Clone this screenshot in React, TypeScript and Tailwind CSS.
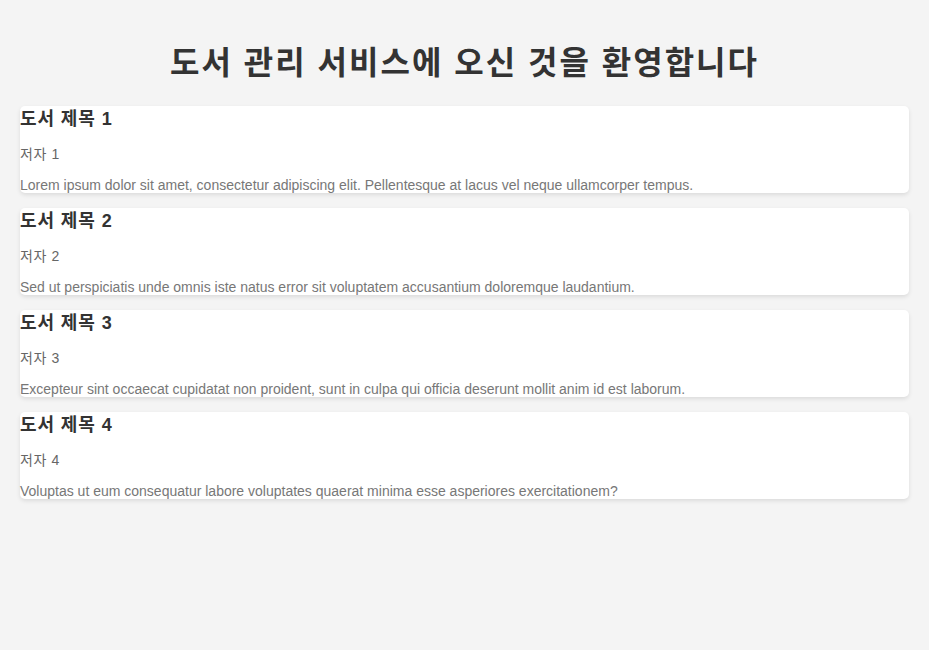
const books = [
  {
    title: '도서 제목 1',
    author: '저자 1',
    description: 'Lorem ipsum dolor sit amet, consectetur adipiscing elit. Pellentesque at lacus vel neque ullamcorper tempus.',
  },
  {
    title: '도서 제목 2',
    author: '저자 2',
    description: 'Sed ut perspiciatis unde omnis iste natus error sit voluptatem accusantium doloremque laudantium.',
  },
  {
    title: '도서 제목 3',
    author: '저자 3',
    description: 'Excepteur sint occaecat cupidatat non proident, sunt in culpa qui officia deserunt mollit anim id est laborum.',
  },
  {
    title: '도서 제목 4',
    author: '저자 4',
    description: 'Voluptas ut eum consequatur labore voluptates quaerat minima esse asperiores exercitationem?',
  },
];

type Book = (typeof books)[number];

const BookCard = ({ book }: { book: Book }) => (
  <div className="flex flex-col bg-white rounded-[5px] shadow-[0_2px_4px_rgba(0,0,0,0.1)]">
    <h3 className="text-[18px] leading-[26px] font-bold tracking-[0.9px] text-[#333]">{book.title}</h3>
    <p className="mt-[14px] text-[14px] leading-[16px] tracking-[0.6px] text-[#666]">{book.author}</p>
    <p className="mt-[15px] text-[14px] leading-[16px] text-[#777]">{book.description}</p>
  </div>
);

export default function App() {
  return (
    <div
      className="min-h-[650px] bg-[#f4f4f4] px-[20px] pt-[20px]"
      style={{ fontFamily: '"Liberation Sans", Arial, "Noto Sans CJK KR", sans-serif' }}
    >
      <h1 className="mt-[21px] text-center text-[32px] leading-[44px] font-bold tracking-[2px] text-[#333]">
        도서 관리 서비스에 오신 것을 환영합니다
      </h1>
      <div className="mt-[21px] flex flex-col gap-[15px]">
        {books.map((book) => (
          <BookCard key={book.title} book={book} />
        ))}
      </div>
    </div>
  );
}
